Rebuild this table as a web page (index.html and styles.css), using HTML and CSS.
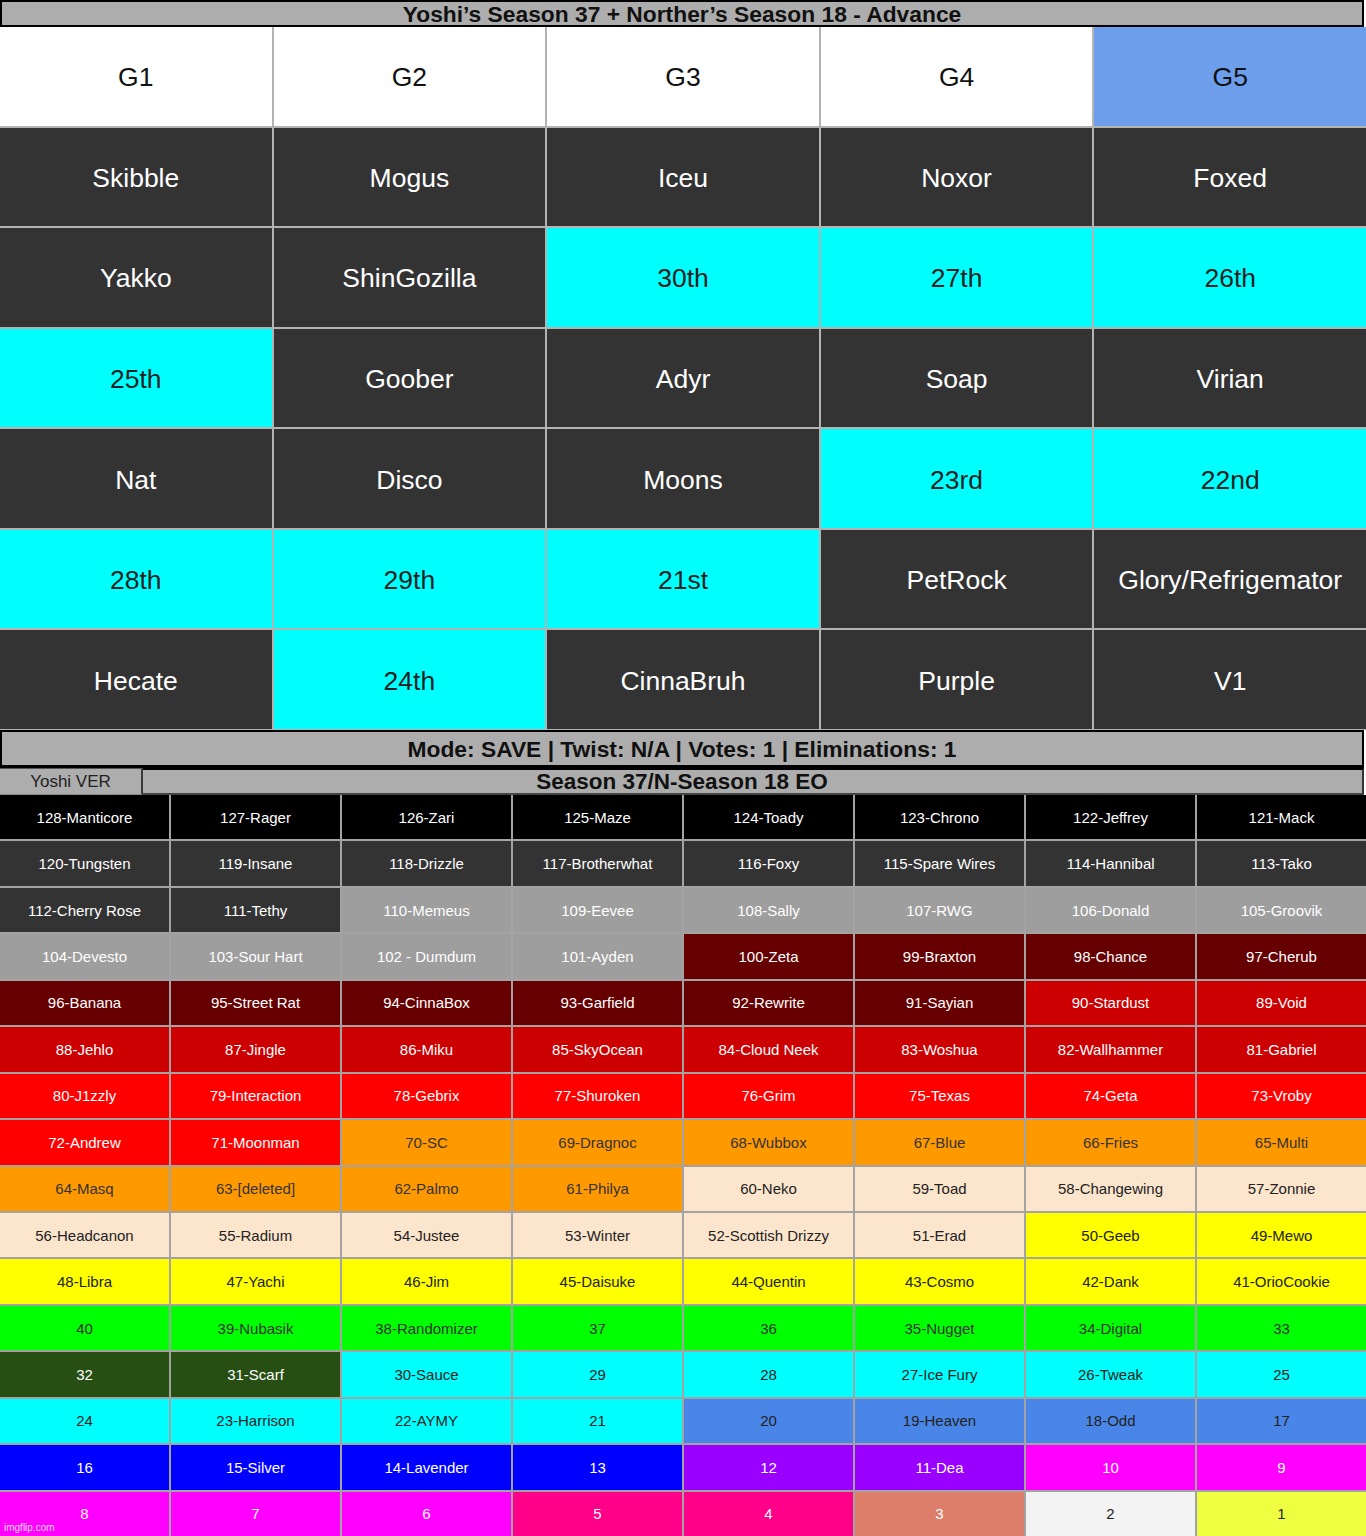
FILE: index.html
```html
<!DOCTYPE html>
<html>
<head>
<meta charset="utf-8">
<link rel="stylesheet" href="styles.css">
</head>
<body>
<div class="page">
  <div class="title-bar">Yoshi’s Season 37 + Norther’s Season 18 - Advance</div>
  <div class="groups">
    <div class="g w">G1</div><div class="g w">G2</div><div class="g w">G3</div><div class="g w">G4</div><div class="g b">G5</div>
    <div class="g d">Skibble</div><div class="g d">Mogus</div><div class="g d">Iceu</div><div class="g d">Noxor</div><div class="g d">Foxed</div>
    <div class="g d">Yakko</div><div class="g d">ShinGozilla</div><div class="g c">30th</div><div class="g c">27th</div><div class="g c">26th</div>
    <div class="g c">25th</div><div class="g d">Goober</div><div class="g d">Adyr</div><div class="g d">Soap</div><div class="g d">Virian</div>
    <div class="g d">Nat</div><div class="g d">Disco</div><div class="g d">Moons</div><div class="g c">23rd</div><div class="g c">22nd</div>
    <div class="g c">28th</div><div class="g c">29th</div><div class="g c">21st</div><div class="g d">PetRock</div><div class="g d">Glory/Refrigemator</div>
    <div class="g d">Hecate</div><div class="g c">24th</div><div class="g d">CinnaBruh</div><div class="g d">Purple</div><div class="g d">V1</div>
  </div>
  <div class="mode-bar">Mode: SAVE | Twist: N/A | Votes: 1 | Eliminations: 1</div>
  <div class="sub-bar">
    <div class="ver">Yoshi VER</div>
    <div class="season">Season 37/N-Season 18 EO</div>
  </div>
  <div class="elim">
    <div class="e k">128-Manticore</div><div class="e k">127-Rager</div><div class="e k">126-Zari</div><div class="e k">125-Maze</div><div class="e k">124-Toady</div><div class="e k">123-Chrono</div><div class="e k">122-Jeffrey</div><div class="e k">121-Mack</div>
    <div class="e dk">120-Tungsten</div><div class="e dk">119-Insane</div><div class="e dk">118-Drizzle</div><div class="e dk">117-Brotherwhat</div><div class="e dk">116-Foxy</div><div class="e dk">115-Spare Wires</div><div class="e dk">114-Hannibal</div><div class="e dk">113-Tako</div>
    <div class="e dk">112-Cherry Rose</div><div class="e dk">111-Tethy</div><div class="e gy">110-Memeus</div><div class="e gy">109-Eevee</div><div class="e gy">108-Sally</div><div class="e gy">107-RWG</div><div class="e gy">106-Donald</div><div class="e gy">105-Groovik</div>
    <div class="e gy">104-Devesto</div><div class="e gy">103-Sour Hart</div><div class="e gy">102 - Dumdum</div><div class="e gy">101-Ayden</div><div class="e mr">100-Zeta</div><div class="e mr">99-Braxton</div><div class="e mr">98-Chance</div><div class="e mr">97-Cherub</div>
    <div class="e mr">96-Banana</div><div class="e mr">95-Street Rat</div><div class="e mr">94-CinnaBox</div><div class="e mr">93-Garfield</div><div class="e mr">92-Rewrite</div><div class="e mr">91-Sayian</div><div class="e r2">90-Stardust</div><div class="e r2">89-Void</div>
    <div class="e r2">88-Jehlo</div><div class="e r2">87-Jingle</div><div class="e r2">86-Miku</div><div class="e r2">85-SkyOcean</div><div class="e r2">84-Cloud Neek</div><div class="e r2">83-Woshua</div><div class="e r2">82-Wallhammer</div><div class="e r2">81-Gabriel</div>
    <div class="e rd">80-J1zzly</div><div class="e rd">79-Interaction</div><div class="e rd">78-Gebrix</div><div class="e rd">77-Shuroken</div><div class="e rd">76-Grim</div><div class="e rd">75-Texas</div><div class="e rd">74-Geta</div><div class="e rd">73-Vroby</div>
    <div class="e rd">72-Andrew</div><div class="e rd">71-Moonman</div><div class="e or">70-SC</div><div class="e or">69-Dragnoc</div><div class="e or">68-Wubbox</div><div class="e or">67-Blue</div><div class="e or">66-Fries</div><div class="e or">65-Multi</div>
    <div class="e or">64-Masq</div><div class="e or">63-[deleted]</div><div class="e or">62-Palmo</div><div class="e or">61-Philya</div><div class="e pe">60-Neko</div><div class="e pe">59-Toad</div><div class="e pe">58-Changewing</div><div class="e pe">57-Zonnie</div>
    <div class="e pe">56-Headcanon</div><div class="e pe">55-Radium</div><div class="e pe">54-Justee</div><div class="e pe">53-Winter</div><div class="e pe">52-Scottish Drizzy</div><div class="e pe">51-Erad</div><div class="e ye">50-Geeb</div><div class="e ye">49-Mewo</div>
    <div class="e ye">48-Libra</div><div class="e ye">47-Yachi</div><div class="e ye">46-Jim</div><div class="e ye">45-Daisuke</div><div class="e ye">44-Quentin</div><div class="e ye">43-Cosmo</div><div class="e ye">42-Dank</div><div class="e ye">41-OrioCookie</div>
    <div class="e gr">40</div><div class="e gr">39-Nubasik</div><div class="e gr">38-Randomizer</div><div class="e gr">37</div><div class="e gr">36</div><div class="e gr">35-Nugget</div><div class="e gr">34-Digital</div><div class="e gr">33</div>
    <div class="e dg">32</div><div class="e dg">31-Scarf</div><div class="e cy">30-Sauce</div><div class="e cy">29</div><div class="e cy">28</div><div class="e cy">27-Ice Fury</div><div class="e cy">26-Tweak</div><div class="e cy">25</div>
    <div class="e cy">24</div><div class="e cy">23-Harrison</div><div class="e cy">22-AYMY</div><div class="e cy">21</div><div class="e lb">20</div><div class="e lb">19-Heaven</div><div class="e lb">18-Odd</div><div class="e lb">17</div>
    <div class="e bl">16</div><div class="e bl">15-Silver</div><div class="e bl">14-Lavender</div><div class="e bl">13</div><div class="e pu">12</div><div class="e pu">11-Dea</div><div class="e mg">10</div><div class="e mg">9</div>
    <div class="e mg">8</div><div class="e mg">7</div><div class="e mg">6</div><div class="e pk">5</div><div class="e pk">4</div><div class="e sa">3</div><div class="e wh">2</div><div class="e lime">1</div>
  </div>
  <div class="watermark">imgflip.com</div>
</div>
</body>
</html>
```

FILE: styles.css
```css
* { box-sizing: border-box; }
html, body { margin: 0; padding: 0; background: #fff; }
body { font-family: "Liberation Sans", Arial, sans-serif; }
.page { position: relative; width: 1366px; height: 1536px; overflow: hidden; }

.title-bar {
  height: 27px;
  width: 1364px;
  background: #adadad;
  border: 2px solid #000;
  color: #111;
  font-weight: bold;
  font-size: 22.8px;
  line-height: 24px;
  text-align: center;
  white-space: nowrap;
}

.groups {
  display: grid;
  grid-template-columns: repeat(5, 1fr);
  grid-template-rows: repeat(7, 1fr);
  gap: 2px;
  height: 703px;
  background: #b3b3b3;
  padding-bottom: 1px;
}
.g {
  display: flex;
  align-items: center;
  justify-content: center;
  padding-top: 3px;
  font-size: 26.5px;
  white-space: nowrap;
}
.g.w { background: #fff; color: #111; }
.g.b { background: #6d9eeb; color: #111; }
.g.d { background: #333; color: #fff; }
.g.c { background: #00ffff; color: #222; }

.mode-bar {
  height: 38px;
  width: 1364px;
  background: #adadad;
  border: 2px solid #000;
  border-bottom-width: 3px;
  color: #111;
  font-weight: bold;
  font-size: 22.8px;
  line-height: 34px;
  text-align: center;
  white-space: nowrap;
}

.sub-bar {
  display: flex;
  height: 27px;
  width: 1364px;
}
.ver {
  width: 143px;
  background: #adadad;
  border-top: 1px solid #555;
  border-right: 2px solid #3a3a3a;
  border-bottom: 1px solid #888;
  color: #222;
  font-size: 17px;
  line-height: 25px;
  text-align: center;
}
.season {
  flex: 1;
  background: #adadad;
  border-top: 2px solid #000;
  border-right: 2px solid #333;
  border-bottom: 2px solid #444;
  padding-right: 141px;
  color: #111;
  font-weight: bold;
  font-size: 22.5px;
  line-height: 24px;
  text-align: center;
  white-space: nowrap;
}

.elim {
  display: grid;
  grid-template-columns: repeat(8, 1fr);
  grid-template-rows: repeat(16, 1fr);
  gap: 2px;
  height: 741px;
  background: #a3a3a3;
}
.e {
  display: flex;
  align-items: center;
  justify-content: center;
  font-size: 15px;
  white-space: nowrap;
  color: #fff;
}
.e.k { background: #000; }
.e.dk { background: #333; }
.e.gy { background: #9e9e9e; }
.e.mr { background: #660000; }
.e.r2 { background: #cc0000; }
.e.rd { background: #ff0000; }
.e.or { background: #ff9900; color: #333; }
.e.pe { background: #fce5cd; color: #222; }
.e.ye { background: #ffff00; color: #222; }
.e.gr { background: #00ff00; color: #333; }
.e.dg { background: #274e13; }
.e.cy { background: #00ffff; color: #222; }
.e.lb { background: #4a86e8; color: #222; }
.e.bl { background: #0000ff; }
.e.pu { background: #9900ff; }
.e.mg { background: #ff00ff; }
.e.pk { background: #ff0088; }
.e.sa { background: #dd7e6b; }
.e.wh { background: #f3f3f3; color: #222; }
.e.lime { background: #eeff41; color: #222; }

.watermark {
  position: absolute;
  left: 4px;
  bottom: 3px;
  font-size: 10px;
  color: rgba(255, 255, 255, 0.85);
}
```
